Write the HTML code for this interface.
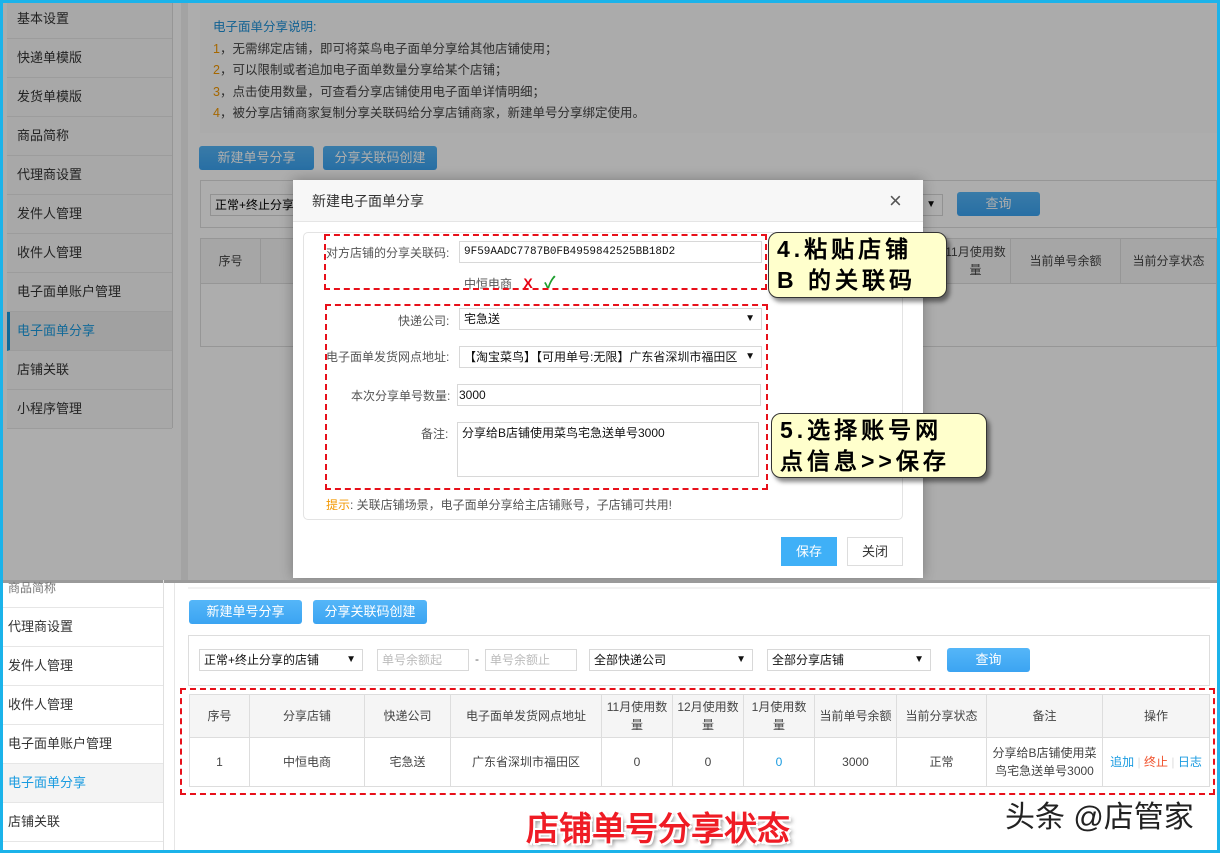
<!DOCTYPE html>
<html><head><meta charset="utf-8"><style>
*{margin:0;padding:0;box-sizing:border-box}
body{width:1220px;height:853px;background:#1bb3ea;position:relative;overflow:hidden;font-family:"Liberation Sans","Noto Sans CJK SC",sans-serif;font-size:12px;color:#333}
.abs{position:absolute}
.pane{position:absolute;background:#fff;overflow:hidden}
.side .it{position:absolute;left:0;width:100%;height:39px;border-bottom:1px solid #e6e6e6;padding-left:10px;line-height:38px;font-size:13px;color:#333}
.btn{position:absolute;background:linear-gradient(#55b6f8,#3ba4f2);color:#fff;text-align:center;border-radius:3px;font-size:13px}
.inp{position:absolute;border:1px solid #d8d8d8;background:#fff;height:22px;line-height:20px;padding-left:4px;font-size:12px;white-space:nowrap;overflow:hidden}
.sel::after{content:"▼";position:absolute;right:6px;top:0;font-size:10px;color:#111}
table{border-collapse:collapse;position:absolute;table-layout:fixed}
td,th{border:1px solid #ddd;text-align:center;font-weight:normal;color:#444;font-size:12px;line-height:18px}
th{background:#f5f5f5}
.dash{position:absolute;border:2px dashed #e8101a}
.call{position:absolute;background:#ffffcc;border:1.5px solid #333;border-radius:10px;box-shadow:3px 4px 4px rgba(0,0,0,.45);font-weight:bold;font-size:23px;letter-spacing:4px;line-height:31px;color:#000;padding:1px 8px;white-space:nowrap;font-family:"Liberation Sans","WenQuanYi Zen Hei",sans-serif}
</style></head><body>

<div class="pane" style="left:3px;top:3px;width:1214px;height:577px;background:#fff">
  <div class="side abs" style="left:4px;top:-3px;width:166px;height:428px;background:#f8f8f8;border-right:1px solid #ddd">
    <div class="it" style="top:0">基本设置</div>
    <div class="it" style="top:39px">快递单模版</div>
    <div class="it" style="top:78px">发货单模版</div>
    <div class="it" style="top:117px">商品简称</div>
    <div class="it" style="top:156px">代理商设置</div>
    <div class="it" style="top:195px">发件人管理</div>
    <div class="it" style="top:234px">收件人管理</div>
    <div class="it" style="top:273px">电子面单账户管理</div>
    <div class="it" style="top:312px;background:#eee;color:#1a9be0;border-left:3px solid #1a9be0;padding-left:7px">电子面单分享</div>
    <div class="it" style="top:351px">店铺关联</div>
    <div class="it" style="top:390px">小程序管理</div>
  </div>
  <div class="abs" style="left:178px;top:0;width:7px;height:577px;background:#f0f0f0"></div>
  <div class="abs" style="left:197px;top:2px;width:1017px;height:128px;background:#fcfcfc;padding:12px 0 0 13px;font-size:12.5px;line-height:21.5px;color:#444">
    <div style="color:#1a8fd8">电子面单分享说明:</div>
    <div><span style="color:#f39800">1</span>，无需绑定店铺，即可将菜鸟电子面单分享给其他店铺使用；</div>
    <div><span style="color:#f39800">2</span>，可以限制或者追加电子面单数量分享给某个店铺；</div>
    <div><span style="color:#f39800">3</span>，点击使用数量，可查看分享店铺使用电子面单详情明细；</div>
    <div><span style="color:#f39800">4</span>，被分享店铺商家复制分享关联码给分享店铺商家，新建单号分享绑定使用。</div>
  </div>
  <div class="btn" style="left:196px;top:143px;width:115px;height:24px;line-height:24px">新建单号分享</div>
  <div class="btn" style="left:320px;top:143px;width:114px;height:24px;line-height:24px">分享关联码创建</div>
  <div class="abs" style="left:197px;top:177px;width:1017px;height:48px;border:1px solid #ddd"></div>
  <div class="inp" style="left:207px;top:191px;width:100px;color:#000">正常+终止分享的店铺</div>
  <div class="inp sel" style="left:900px;top:191px;width:40px"></div>
  <div class="btn" style="left:954px;top:189px;width:83px;height:24px;line-height:24px">查询</div>
  <table style="left:197px;top:235px;width:1017px">
    <tr style="height:45px"><th style="width:60px">序号</th><th style="width:680px"></th><th style="width:70px">11月使用数<br>量</th><th style="width:110px">当前单号余额</th><th>当前分享状态</th></tr>
    <tr style="height:63px"><td colspan="5"></td></tr>
  </table>
  <div class="abs" style="left:0;top:0;width:1214px;height:577px;background:rgba(0,0,0,.32)"></div>
</div>

<div class="abs" style="left:293px;top:180px;width:630px;height:398px;background:#fff;box-shadow:0 0 12px rgba(0,0,0,.3)">
  <div class="abs" style="left:0;top:0;width:630px;height:42px;background:#f7f7f7;border-bottom:1px solid #e5e5e5;padding-left:19px;line-height:42px;font-size:14px;color:#333">新建电子面单分享</div>
  <div class="abs" style="left:596px;top:8px;font-size:22px;color:#555">×</div>
  <div class="abs" style="left:10px;top:52px;width:600px;height:288px;border:1px solid #e3e3e3;border-radius:5px"></div>
  <div class="abs" style="left:33px;top:64px;font-size:12px;color:#555">对方店铺的分享关联码:</div>
  <div class="inp" style="left:166px;top:61px;width:303px;font-family:'Liberation Mono',monospace;font-size:11px;color:#111">9F59AADC7787B0FB4959842525BB18D2</div>
  <div class="abs" style="left:171px;top:89px;color:#555">中恒电商 <span style="color:#e60012;font-weight:bold;margin-left:8px;font-size:14px">X</span> <span style="color:#1e9e2e;font-weight:bold;margin-left:8px;font-size:16px">✓</span></div>
  <div class="abs" style="left:105px;top:132px;color:#555">快递公司:</div>
  <div class="inp sel" style="left:166px;top:128px;width:303px;color:#111">宅急送</div>
  <div class="abs" style="left:33px;top:168px;color:#555">电子面单发货网点地址:</div>
  <div class="inp sel" style="left:166px;top:166px;width:303px;color:#111;padding-right:18px">【淘宝菜鸟】【可用单号:无限】广东省深圳市福田区</div>
  <div class="abs" style="left:58px;top:207px;color:#555">本次分享单号数量:</div>
  <div class="inp" style="left:164px;top:204px;width:304px;padding-left:1px;color:#111">3000</div>
  <div class="abs" style="left:128px;top:245px;color:#555">备注:</div>
  <div class="inp" style="left:164px;top:242px;width:302px;height:55px;color:#111">分享给B店铺使用菜鸟宅急送单号3000</div>
  <div class="abs" style="left:33px;top:316px;color:#555"><span style="color:#f39800">提示</span>: 关联店铺场景，电子面单分享给主店铺账号，子店铺可共用!</div>
  <div class="abs" style="left:488px;top:357px;width:56px;height:29px;background:#3fb0f7;color:#fff;text-align:center;line-height:29px;font-size:13px">保存</div>
  <div class="abs" style="left:554px;top:357px;width:56px;height:29px;border:1px solid #ddd;color:#333;text-align:center;line-height:27px;font-size:13px">关闭</div>
</div>
<div class="dash" style="left:324px;top:234px;width:443px;height:56px"></div>
<div class="dash" style="left:325px;top:304px;width:443px;height:186px"></div>
<div class="call" style="left:768px;top:232px;width:179px;height:66px">4.粘贴店铺<br>B 的关联码</div>
<div class="call" style="left:771px;top:413px;width:216px;height:65px">5.选择账号网<br>点信息&gt;&gt;保存</div>

<div class="pane" style="left:3px;top:580px;width:1214px;height:270px;background:#fff">
  <div class="abs" style="left:0;top:0;width:1214px;height:3px;background:#9a9a9a"></div>
  <div class="side abs" style="left:0;top:-11px;width:161px;height:290px;border-right:1px solid #e0e0e0">
    <div class="it" style="top:0;padding-left:5px;font-size:12px;color:#777">商品简称</div>
    <div class="it" style="top:39px;padding-left:5px">代理商设置</div>
    <div class="it" style="top:78px;padding-left:5px">发件人管理</div>
    <div class="it" style="top:117px;padding-left:5px">收件人管理</div>
    <div class="it" style="top:156px;padding-left:5px">电子面单账户管理</div>
    <div class="it" style="top:195px;padding-left:5px;background:#f4f4f4;color:#1a9be0">电子面单分享</div>
    <div class="it" style="top:234px;padding-left:5px">店铺关联</div>
  </div>
  <div class="abs" style="left:171px;top:3px;width:1px;height:267px;background:#e6e6e6"></div>
  <div class="abs" style="left:185px;top:7px;width:1022px;height:2px;background:#f2f2f2"></div>
  <div class="btn" style="left:186px;top:20px;width:113px;height:24px;line-height:24px">新建单号分享</div>
  <div class="btn" style="left:310px;top:20px;width:114px;height:24px;line-height:24px">分享关联码创建</div>
  <div class="abs" style="left:185px;top:55px;width:1022px;height:51px;border:1px solid #ddd"></div>
  <div class="inp sel" style="left:196px;top:69px;width:164px;color:#111">正常+终止分享的店铺</div>
  <div class="inp" style="left:374px;top:69px;width:92px;color:#bbb">单号余额起</div>
  <div class="abs" style="left:472px;top:72px;color:#666">-</div>
  <div class="inp" style="left:482px;top:69px;width:92px;color:#bbb">单号余额止</div>
  <div class="inp sel" style="left:586px;top:69px;width:164px;color:#111">全部快递公司</div>
  <div class="inp sel" style="left:764px;top:69px;width:164px;color:#111">全部分享店铺</div>
  <div class="btn" style="left:944px;top:68px;width:83px;height:24px;line-height:24px">查询</div>
  <table style="left:186px;top:114px;width:1021px">
    <tr style="height:43px"><th style="width:60px">序号</th><th style="width:115px">分享店铺</th><th style="width:86px">快递公司</th><th style="width:151px">电子面单发货网点地址</th><th style="width:71px">11月使用数<br>量</th><th style="width:71px">12月使用数<br>量</th><th style="width:71px">1月使用数<br>量</th><th style="width:82px">当前单号余额</th><th style="width:90px">当前分享状态</th><th style="width:116px">备注</th><th>操作</th></tr>
    <tr style="height:49px"><td>1</td><td>中恒电商</td><td>宅急送</td><td>广东省深圳市福田区</td><td>0</td><td>0</td><td style="color:#1a9be0">0</td><td>3000</td><td>正常</td><td>分享给B店铺使用菜<br>鸟宅急送单号3000</td><td><span style="color:#1a9be0">追加</span> <span style="color:#ddd">|</span> <span style="color:#f0502a">终止</span> <span style="color:#ddd">|</span> <span style="color:#1a9be0">日志</span></td></tr>
  </table>
  <div class="dash" style="left:177px;top:108px;width:1035px;height:107px"></div>
  <div class="abs" style="left:523px;top:222px;font-size:33px;font-weight:bold;color:#ef1c25;text-shadow:-2px -2px 0 #fff,2px 2px 0 #fff,2px -2px 0 #fff,-2px 2px 0 #fff,3px 3px 4px rgba(0,0,0,.5);font-family:'Liberation Sans','WenQuanYi Zen Hei',sans-serif">店铺单号分享状态</div>
  <div class="abs" style="left:1002px;top:212px;font-size:30px;color:#222;font-family:'Liberation Sans','Noto Sans CJK SC',sans-serif">头条 @店管家</div>
</div>
</body></html>
